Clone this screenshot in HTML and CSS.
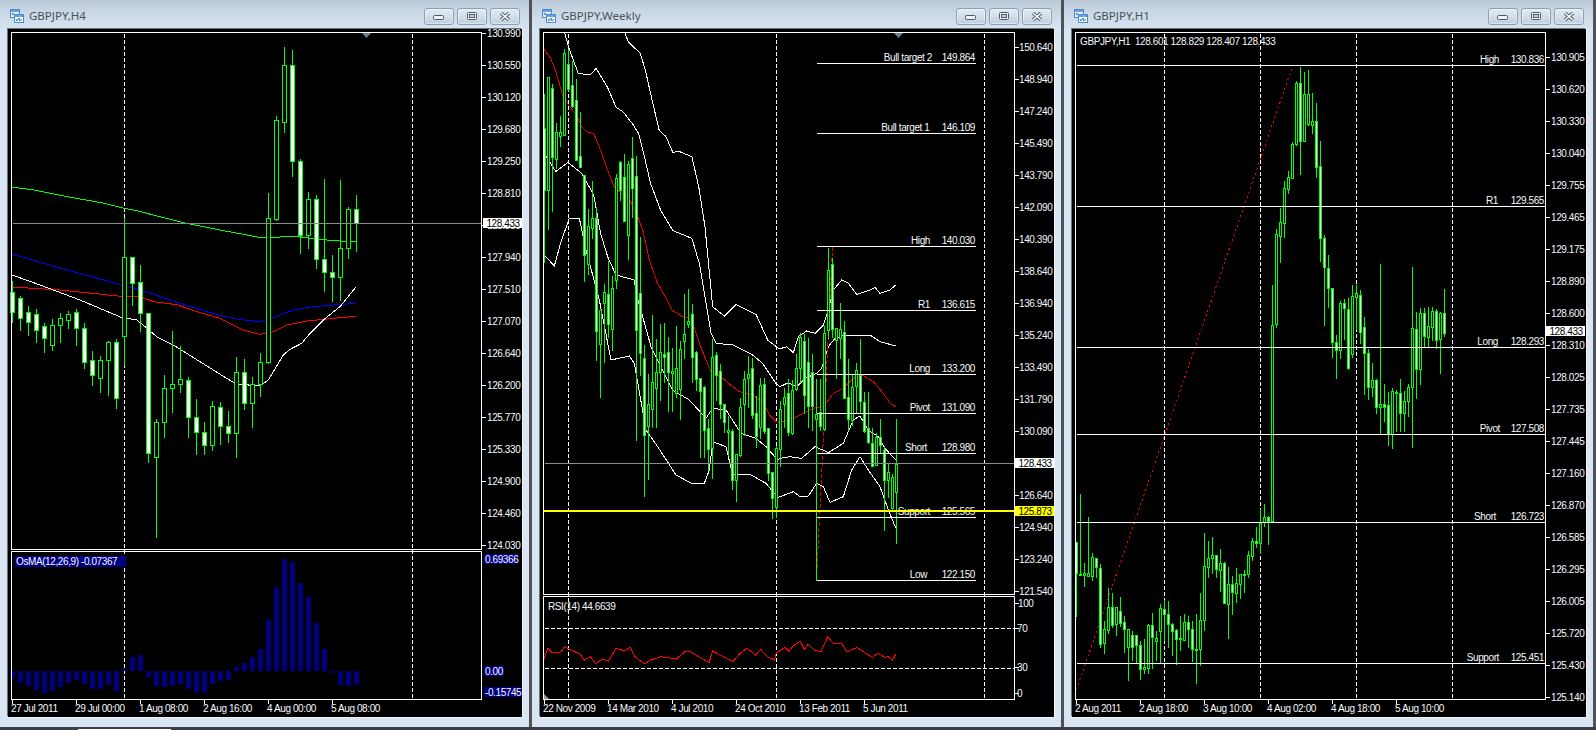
FILE: index.html

```html
<!DOCTYPE html>
<html lang="en">
<head>
    <meta charset="UTF-8">
    <title>GBPJPY charts</title>
    <link rel="stylesheet" href="styles.css">
</head>
<body>

    <svg class="sprite" width="0" height="0">
        <symbol id="chart-icon" viewBox="0 0 14 14">
            <rect x="0.5" y="0.5" width="9" height="8" fill="#e4f0fc" stroke="#4d8acb"/>
            <rect x="1" y="1" width="8" height="2" fill="#6ba3dc"/>
            <polyline points="2,6 3,4 5,7 7,5" fill="none" stroke="#3b78bb"/>
            <rect x="4.5" y="5.5" width="9" height="8" fill="#f2f8fe" stroke="#4d8acb"/>
            <rect x="5" y="6" width="8" height="2" fill="#6ba3dc"/>
            <polyline points="6,10 7,12 9,9 10,12 12,10" fill="none" stroke="#3b78bb"/>
        </symbol>
        <symbol id="btn-min" viewBox="0 0 12 9">
            <rect x="0.5" y="3.5" width="10" height="4" rx="1" fill="#eef3f8" stroke="#4c5a69"/>
        </symbol>
        <symbol id="btn-max" viewBox="0 0 12 9">
            <rect x="1.5" y="0.5" width="9" height="7" rx="1" fill="#eef3f8" stroke="#4c5a69"/>
            <rect x="3.5" y="2.5" width="5" height="3" fill="#c5d2e0" stroke="#4c5a69"/>
        </symbol>
        <symbol id="btn-close" viewBox="0 0 12 9">
            <path d="M2 1 L10 8 M10 1 L2 8" stroke="#4c5a69" stroke-width="3.4" fill="none"/>
            <path d="M2 1 L10 8 M10 1 L2 8" stroke="#fff" stroke-width="1.6" fill="none"/>
        </symbol>
    </svg>

    <main class="desk">

        <section class="window">
            <header class="titlebar">
                <svg class="win-icon"><use href="#chart-icon"/></svg>
                <span class="title">GBPJPY,H4</span>
                <div class="buttons">
                    <button class="btn"><svg><use href="#btn-min"/></svg></button>
                    <button class="btn"><svg><use href="#btn-max"/></svg></button>
                    <button class="btn"><svg><use href="#btn-close"/></svg></button>
                </div>
            </header>
            <div class="client">
                <svg class="chart" id="chart-h4" viewBox="8 29 514 688"></svg>
            </div>
        </section>

        <section class="window">
            <header class="titlebar">
                <svg class="win-icon"><use href="#chart-icon"/></svg>
                <span class="title">GBPJPY,Weekly</span>
                <div class="buttons">
                    <button class="btn"><svg><use href="#btn-min"/></svg></button>
                    <button class="btn"><svg><use href="#btn-max"/></svg></button>
                    <button class="btn"><svg><use href="#btn-close"/></svg></button>
                </div>
            </header>
            <div class="client">
                <svg class="chart" id="chart-weekly" viewBox="540 29 514 688"></svg>
            </div>
        </section>

        <section class="window">
            <header class="titlebar">
                <svg class="win-icon"><use href="#chart-icon"/></svg>
                <span class="title">GBPJPY,H1</span>
                <div class="buttons">
                    <button class="btn"><svg><use href="#btn-min"/></svg></button>
                    <button class="btn"><svg><use href="#btn-max"/></svg></button>
                    <button class="btn"><svg><use href="#btn-close"/></svg></button>
                </div>
            </header>
            <div class="client">
                <svg class="chart" id="chart-h1" viewBox="1072 29 514 688"></svg>
            </div>
        </section>

    </main>

    <footer class="taskbar">
        <div class="tab"></div>
    </footer>

    <script src="chart.js"></script>

</body>
</html>
```

FILE: styles.css

```css
body {
    margin: 0;
    height: 730px;
    overflow: hidden;
    display: flex;
    flex-direction: column;
    background: #4f5358;
}

.sprite {
    position: absolute;
}

.desk {
    display: flex;
    gap: 3px;
    height: 727px;
}

.window {
    width: 529px;
    flex: none;
    display: flex;
    flex-direction: column;
    background: #d9e5f2;
}

.titlebar {
    height: 28px;
    flex: none;
    display: flex;
    align-items: flex-start;
    padding: 8px 9px 0 10px;
    box-sizing: border-box;
    background: linear-gradient(#b9c8d7, #c9d7e5 40%, #d6e3f0);
}

.win-icon {
    width: 14px;
    height: 14px;
    margin-top: 1px;
    flex: none;
}

.title {
    margin-left: 5px;
    font: 11.5px/16px "Noto Sans", sans-serif;
    color: #47525e;
}

.buttons {
    margin-left: auto;
    display: flex;
    gap: 3px;
}

.btn {
    width: 30px;
    height: 17px;
    padding: 0;
    display: flex;
    align-items: center;
    justify-content: center;
    border: 1px solid #8a9fb8;
    border-radius: 3px;
    background: linear-gradient(#e3ebf4, #d2deea 50%, #bfcedd);
    box-shadow: inset 0 0 0 1px rgba(255, 255, 255, 0.45);
}

.btn svg {
    width: 12px;
    height: 9px;
}

.client {
    margin: 1px 7px 10px 8px;
    height: 688px;
    background: #000;
    box-shadow: -1px -1px 0 #6d7277, 1px 1px 0 #eef3f8;
}

.chart {
    display: block;
    width: 514px;
    height: 688px;
}

.chart text {
    font: 10px "Liberation Sans", sans-serif;
    letter-spacing: -0.4px;
    white-space: pre;
    fill: #f6f9fd;
}

.chart text.on-white {
    fill: #000;
}

.chart line,
.chart rect,
.chart polyline {
    shape-rendering: crispEdges;
}

.taskbar {
    height: 3px;
    background: #3c3f43;
    padding-left: 78px;
}

.tab {
    width: 93px;
    height: 1px;
    margin-top: 2px;
    background: #fff;
}
```

FILE: chart.js

```js
const NS = 'http://www.w3.org/2000/svg';
const LIME = '#00ff00';
const NAVY = '#000080';
const GREY = '#8c8c8c';

function add(svg, tag, attrs, text) {
    const node = document.createElementNS(NS, tag);
    for (const key in attrs) node.setAttribute(key, attrs[key]);
    if (text !== undefined) node.textContent = text;
    svg.appendChild(node);
    return node;
}

const px = v => Math.round(v) + 0.5;

function line(svg, x1, y1, x2, y2, stroke, extra) {
    add(svg, 'line', Object.assign({ x1: px(x1), y1: px(y1), x2: px(x2), y2: px(y2), stroke }, extra));
}

function dashed(svg, x1, y1, x2, y2, stroke) {
    line(svg, x1, y1, x2, y2, stroke || '#fff', { 'stroke-dasharray': '4 2' });
}

function path(svg, points, stroke) {
    add(svg, 'polyline', { points: points.map(p => p.join(',')).join(' '), fill: 'none', stroke });
}

function label(svg, x, y, str, anchor, cls) {
    const attrs = { x, y: y + 3.5, 'text-anchor': anchor || 'start' };
    if (cls) attrs.class = cls;
    add(svg, 'text', attrs, str);
}

function box(svg, x1, y1, x2, y2) {
    add(svg, 'rect', { x: x1 + 0.5, y: y1 + 0.5, width: x2 - x1, height: y2 - y1, fill: 'none', stroke: '#fff' });
}

function tag(svg, x, y, w, h, fill, str, cls) {
    add(svg, 'rect', { x, y, width: w, height: h, fill });
    label(svg, x + 1, y + h / 2, str, 'start', cls);
}

// rows are [wickTop, bodyTop, bodyBottom, wickBottom, filled], y = oy + value / k
function series(x0, step, oy, k, rows) {
    return rows.map((r, i) => ({
        x: x0 + step * i,
        wt: oy + r[0] / k,
        bt: oy + r[1] / k,
        bb: oy + r[2] / k,
        wb: oy + r[3] / k,
        filled: r[4]
    }));
}

function candles(svg, list, half) {
    for (const c of list) {
        line(svg, c.x, c.wt, c.x, c.wb, LIME);
        add(svg, 'rect', {
            x: c.x - half + 0.5,
            y: px(c.bt),
            width: half * 2,
            height: Math.max(Math.round(c.bb) - Math.round(c.bt), 1),
            fill: c.filled ? '#fff' : '#000',
            stroke: LIME
        });
    }
}

// points given in crop pixels, turned into page pixels
const crop = (pts, ox, oy, kx, ky) => pts.map(p => [ox + p[0] / kx, oy + p[1] / (ky || kx)]);

function priceAxis(svg, plotRight, textX, top, step, values) {
    values.forEach((v, i) => {
        const y = top + step * i;
        line(svg, plotRight, y, plotRight + 4, y, '#fff');
        label(svg, textX, y, v);
    });
}

function timeAxis(svg, y, labels) {
    for (const l of labels) {
        line(svg, l[0] + 1, 699, l[0] + 1, 703, '#fff');
        label(svg, l[0], y, l[1]);
    }
}

/* ---------- H4 ---------- */

function drawH4() {
    const svg = document.getElementById('chart-h4');
    dashed(svg, 124, 33, 124, 699);
    dashed(svg, 412, 33, 412, 699);

    path(svg, [[12, 187], [34, 190], [69, 197], [103, 203]].concat(crop([[13, 115], [50, 122], [100, 135], [150, 148], [200, 160], [300, 180], [370, 193], [420, 203], [480, 201], [530, 199], [580, 206], [630, 211], [680, 214], [707, 214]], 120, 170, 3)), LIME);
    path(svg, [[12, 254], [60, 268], [118, 284]].concat(crop([[0, 345], [70, 362], [150, 390], [230, 415], [300, 437], [350, 447], [420, 455], [460, 442], [520, 420], [580, 410], [630, 406], [707, 400]], 120, 170, 3)), '#0000ff');
    path(svg, [[12, 287], [60, 290], [118, 296]].concat(crop([[0, 380], [60, 380], [100, 395], [170, 404], [240, 428], [300, 445], [370, 480], [420, 493], [460, 485], [500, 465], [560, 453], [620, 447], [707, 439]], 120, 170, 3)), '#ff0000');
    path(svg, [[12, 275], [40, 285], [80, 300], [118, 316]].concat(crop([[0, 441], [50, 450], [75, 470], [110, 500], [160, 525], [240, 575], [320, 625], [350, 643], [420, 647], [445, 630], [490, 555], [510, 538], [545, 520], [570, 490], [610, 450], [660, 410], [707, 352]], 120, 170, 3)), '#fff');

    candles(svg, series(12, 8, 0, 1, [
        [280, 292, 312, 322, 1], [295, 298, 318, 330, 1], [305, 312, 322, 335, 1], [308, 314, 330, 342, 1],
        [322, 326, 338, 352, 1], [318, 325, 345, 350, 0], [312, 318, 325, 342, 0], [310, 314, 320, 328, 0],
        [308, 312, 328, 345, 1], [322, 328, 362, 368, 1], [350, 360, 375, 385, 1], [355, 360, 378, 392, 0],
        [340, 342, 360, 395, 0], [338, 342, 398, 408, 1]
    ]), 2);
    candles(svg, series(124, 8, 170, 3, [
        [140, 262, 497, 585, 0], [262, 262, 338, 405, 1], [282, 337, 430, 483, 1], [430, 430, 848, 876, 1],
        [745, 757, 860, 1100, 0], [612, 655, 757, 800, 0], [480, 643, 655, 726, 0], [525, 628, 643, 666, 0],
        [618, 631, 742, 800, 1], [685, 742, 787, 852, 1], [753, 787, 826, 852, 1], [690, 709, 826, 840, 0],
        [693, 712, 769, 822, 1], [720, 769, 790, 816, 1], [558, 607, 790, 860, 0], [564, 607, 700, 717, 1],
        [618, 643, 700, 770, 0], [546, 577, 643, 678, 0], [66, 145, 577, 580, 0]
    ]), 2);
    candles(svg, series(276, 8, 0, 1, [
        [115, 120, 219, 220, 0], [46, 65, 122, 132, 0], [49, 65, 161, 176, 1], [158, 161, 235, 253, 1],
        [191, 199, 235, 248, 0], [194, 199, 259, 268, 1], [178, 259, 272, 291, 1], [254, 272, 277, 301, 1],
        [179, 248, 277, 300, 0], [206, 209, 248, 258, 0], [194, 209, 223, 251, 1]
    ]), 2);

    line(svg, 12, 223, 481, 223, GREY);

    // OsMA histogram, tops in crop pixels against a zero line at 423
    const bars = [443, 460, 468, 480, 490, 484, 472, 460, 450, 462, 478, 478, 466, 484, 417, 381, 375, 442, 468, 472,
        468, 462, 478, 486, 490, 462, 454, 450, 411, 399, 381, 357, 269, 171, 87, 96, 159, 201, 279, 357, 430, 466, 468, 466];
    bars.forEach((v, i) => {
        const a = 530 + Math.min(v, 423) / 3;
        const b = 530 + Math.max(v, 423) / 3;
        add(svg, 'rect', { x: 12 + 8 * i - 2, y: a, width: 5, height: b - a, fill: NAVY });
    });

    box(svg, 11, 32, 481, 549);
    box(svg, 11, 551, 481, 699);
    add(svg, 'polygon', { points: '362,33 371,33 366.5,38', fill: '#6e7e8e' });

    priceAxis(svg, 481, 487, 33, 32, ['130.990', '130.550', '130.120', '129.680', '129.250', '128.810', '128.380', '127.940',
        '127.510', '127.070', '126.640', '126.200', '125.770', '125.330', '124.900', '124.460', '124.030']);
    tag(svg, 483, 218, 39, 10, '#fff', ' 128.433', 'on-white');
    tag(svg, 15, 556, 111, 11, NAVY, 'OsMA(12,26,9) -0.07367');
    tag(svg, 484, 554, 34, 10, NAVY, '0.69366');
    tag(svg, 484, 666, 20, 10, NAVY, '0.00');
    tag(svg, 484, 687, 38, 10, NAVY, '-0.15745');

    timeAxis(svg, 708, [[11, '27 Jul 2011'], [75, '29 Jul 00:00'], [139, '1 Aug 08:00'], [203, '2 Aug 16:00'], [267, '4 Aug 00:00'], [331, '5 Aug 08:00']]);
}

/* ---------- Weekly ---------- */

function drawWeekly() {
    const svg = document.getElementById('chart-weekly');
    dashed(svg, 568, 33, 568, 699);
    dashed(svg, 776, 33, 776, 699);
    dashed(svg, 984, 33, 984, 699);

    const upper = crop([[275, 97], [285, 125], [320, 160], [335, 210], [350, 280], [375, 390], [395, 410], [415, 458], [430, 453], [470, 470], [490, 560], [505, 660]], 530, 0, 2.904, 3)
        .concat(crop([[505, 60], [530, 320], [565, 348], [600, 313], [660, 343], [695, 420], [730, 447]], 536, 200, 3))
        .concat(crop([[20, 350], [40, 368], [55, 320], [80, 303], [105, 310], [130, 285], [140, 255], [160, 180], [185, 150], [205, 160], [230, 193], [270, 180], [285, 172], [300, 190], [330, 180], [347, 165]], 780, 230, 3));
    const second = crop([[100, 97], [115, 150], [140, 220], [175, 225], [192, 205], [225, 262], [250, 322], [270, 335], [300, 375], [315, 400], [330, 460], [350, 550], [380, 632], [415, 692], [470, 715]], 530, 0, 2.904, 3)
        .concat(crop([[490, 190], [525, 400], [540, 430], [590, 435], [650, 465], [680, 490], [720, 550]], 536, 200, 3))
        .concat(crop([[0, 470], [25, 458], [50, 470], [75, 445], [110, 430], [125, 415], [145, 350], [165, 325], [195, 315], [270, 315], [300, 335], [347, 348]], 780, 230, 3));
    const third = crop([[45, 465], [75, 515], [110, 487], [150, 520], [185, 585], [205, 700]], 530, 0, 2.904, 3)
        .concat(crop([[215, 170], [240, 225], [295, 240], [300, 280], [320, 350], [345, 440], [410, 570], [460, 600], [510, 655], [530, 625], [570, 630], [615, 700], [660, 715], [690, 740], [725, 780]], 536, 200, 3))
        .concat(crop([[0, 685], [30, 680], [65, 685], [105, 650], [145, 668], [190, 640], [220, 570], [240, 558], [265, 600], [295, 620], [315, 655], [347, 690]], 780, 230, 3));
    const lower = crop([[25, 165], [55, 198], [75, 125], [100, 55], [130, 55], [150, 150], [190, 300], [225, 480], [280, 468], [295, 490], [330, 690], [365, 740], [420, 825], [470, 852], [505, 850], [520, 810], [530, 725], [570, 740], [590, 825], [640, 822], [690, 850], [725, 892]], 536, 200, 3)
        .concat(crop([[0, 800], [40, 785], [60, 800], [85, 798], [110, 760], [130, 770], [150, 817], [190, 800], [215, 720], [240, 680], [265, 720], [300, 770], [325, 840], [347, 893]], 780, 230, 3));
    path(svg, upper, '#fff');
    path(svg, second, '#fff');
    path(svg, third, '#fff');
    path(svg, lower, '#fff');

    const ma = crop([[40, 148], [60, 175], [75, 215], [95, 285], [115, 320], [135, 345], [150, 380], [165, 395], [185, 400], [205, 450], [225, 510], [245, 562], [265, 580], [290, 600]], 530, 0, 2.904, 3)
        .concat(crop([[305, 50], [320, 90], [340, 180], [365, 250], [385, 285], [408, 330], [440, 350], [465, 355], [490, 430], [510, 480], [525, 515], [560, 535], [590, 560], [610, 575], [650, 585], [680, 605], [700, 645], [720, 665]], 536, 200, 3))
        .concat(crop([[0, 578], [50, 560], [100, 535], [130, 530], [160, 490], [190, 475], [220, 445], [250, 437], [280, 455], [310, 490], [330, 520], [347, 530]], 780, 230, 3));
    path(svg, ma, '#e00000');

    line(svg, 832, 246, 816, 580, '#e00000', { 'stroke-dasharray': '4 2' });

    candles(svg, series(544, 4, 0, 1, [
        [93, 128, 190, 262, 1], [76, 77, 190, 229, 0], [83, 88, 157, 211, 1], [122, 132, 159, 168, 0],
        [115, 132, 136, 146, 0], [48, 53, 135, 135, 0], [48, 64, 89, 90, 1], [60, 85, 106, 107, 1],
        [78, 100, 160, 160, 1], [111, 156, 167, 167, 1], [174, 175, 255, 281, 1], [208, 226, 264, 274, 0],
        [180, 218, 228, 238, 0], [206, 218, 331, 360, 1], [310, 310, 344, 397, 0], [283, 292, 303, 362, 0],
        [260, 294, 324, 337, 1], [275, 288, 329, 350, 0], [173, 178, 280, 288, 0], [160, 162, 190, 200, 1],
        [153, 177, 221, 210, 1], [160, 164, 235, 259, 0], [136, 158, 188, 217, 1], [155, 176, 330, 440, 1]
    ]), 1);
    candles(svg, series(640, 4, 200, 3, [
        [108, 280, 460, 525, 1], [432, 475, 706, 887, 1], [520, 613, 677, 836, 0], [343, 547, 628, 680, 0],
        [415, 517, 565, 680, 0], [368, 455, 515, 600, 0], [366, 461, 470, 545, 1], [408, 455, 517, 632, 1],
        [440, 514, 520, 632, 0], [376, 503, 580, 590, 0], [420, 448, 568, 656, 0], [280, 403, 424, 475, 0],
        [265, 364, 373, 380, 0], [310, 341, 472, 545, 1], [450, 457, 538, 570, 1], [530, 533, 574, 770, 1],
        [555, 560, 690, 770, 1], [655, 685, 748, 810, 1], [415, 470, 743, 835, 0], [453, 466, 525, 600, 1],
        [490, 512, 613, 655, 1], [610, 613, 667, 695, 1], [645, 691, 695, 765, 0], [685, 694, 840, 868, 1],
        [760, 763, 840, 902, 0], [590, 622, 765, 768, 0], [510, 538, 613, 705, 0], [465, 523, 533, 620, 0],
        [470, 505, 646, 655, 1], [585, 640, 707, 740, 1], [530, 555, 682, 715, 0], [530, 553, 693, 700, 1],
        [680, 685, 820, 840, 1], [815, 815, 893, 955, 1], [735, 745, 922, 950, 0], [600, 628, 748, 797, 0],
        [560, 590, 612, 680, 0], [535, 578, 695, 705, 1], [538, 570, 700, 703, 0], [460, 505, 568, 570, 0],
        [395, 412, 505, 545, 0], [398, 422, 585, 640, 1]
    ]), 1);
    candles(svg, series(808, 4, 230, 3, [
        [320, 395, 527, 590, 1], [370, 425, 527, 600, 1], [445, 553, 568, 1050, 0], [445, 545, 587, 600, 1],
        [285, 310, 597, 600, 0], [50, 120, 300, 325, 0], [80, 102, 298, 320, 1], [290, 293, 330, 445, 0],
        [215, 297, 325, 385, 0], [270, 305, 505, 505, 1], [385, 500, 568, 600, 1], [430, 472, 570, 585, 0],
        [395, 420, 467, 545, 0], [325, 435, 512, 550, 1], [482, 517, 602, 605, 1], [482, 595, 637, 640, 1],
        [590, 640, 707, 707, 1], [605, 622, 705, 705, 0], [565, 620, 645, 670, 1], [645, 660, 750, 900, 1],
        [700, 727, 750, 800, 0], [730, 740, 835, 840, 0], [565, 703, 785, 938, 0]
    ]), 1);

    const levels = [
        ['Bull target 2', '149.864', 63, 932], ['Bull target 1', '146.109', 133, 929.5], ['High', '140.030', 246, 930],
        ['R1', '136.615', 310, 930], ['Long', '133.200', 374, 930], ['Pivot', '131.090', 413, 930],
        ['Short', '128.980', 453, 927], ['Support', '125.565', 517, 930], ['Low', '122.150', 580, 927]
    ];
    for (const l of levels) {
        line(svg, 816, l[2], 975, l[2], '#fff');
        label(svg, l[3], l[2] - 6, l[0], 'end');
        label(svg, 975, l[2] - 6, l[1], 'end');
    }

    line(svg, 544, 463, 1014, 463, GREY);
    add(svg, 'rect', { x: 544, y: 510, width: 471, height: 2, fill: '#ffff00' });

    box(svg, 543, 32, 1014, 594);
    box(svg, 543, 596, 1014, 699);
    add(svg, 'polygon', { points: '894,33 903,33 898.5,38', fill: '#6e7e8e' });
    add(svg, 'polygon', { points: '544,694 544,699 549,699', fill: '#8c99a6' });

    dashed(svg, 544, 628, 1013, 628);
    dashed(svg, 544, 668, 1013, 668);
    path(svg, crop([[40, 658], [52, 625], [65, 638], [90, 636], [100, 620], [115, 628], [145, 642], [158, 660], [175, 650], [190, 670], [210, 658], [228, 663], [250, 625], [275, 633], [290, 622], [305, 650], [332, 672], [350, 660], [380, 650], [425, 657], [450, 635], [465, 635], [520, 668], [530, 633], [590, 665], [610, 640], [630, 625], [655, 645], [670, 628], [690, 650], [710, 660], [715, 640], [740, 622], [752, 635], [765, 617], [785, 604], [797, 628], [808, 613], [825, 630], [845, 635], [865, 590], [880, 610], [905, 610], [920, 636], [950, 622], [975, 640], [995, 652], [1010, 640], [1030, 652], [1040, 650], [1053, 660], [1062, 643]], 530, 440, 2.904, 3), '#ff0000');
    label(svg, 548, 606, 'RSI(14) 44.6639');

    priceAxis(svg, 1014, 1019, 47, 32, ['150.640', '148.940', '147.240', '145.490', '143.790', '142.090', '140.390', '138.640', '136.940',
        '135.240', '133.490', '131.790', '130.090', '128.390', '126.640', '124.940', '123.240', '121.540']);
    tag(svg, 1015, 458, 39, 10, '#fff', ' 128.433', 'on-white');
    tag(svg, 1015, 506, 39, 10, '#ffff00', ' 125.873', 'on-white');

    for (const r of [['100', 603], ['70', 628], ['30', 667], ['0', 693]]) {
        line(svg, 1014, r[1], 1018, r[1], '#fff');
        label(svg, 1017 + (r[0] === '100' ? 1 : 0), r[1], r[0]);
    }

    timeAxis(svg, 708, [[543, '22 Nov 2009'], [607, '14 Mar 2010'], [671, '4 Jul 2010'], [735, '24 Oct 2010'], [799, '13 Feb 2011'], [863, '5 Jun 2011']]);
}

/* ---------- H1 ---------- */

function drawH1() {
    const svg = document.getElementById('chart-h1');
    dashed(svg, 1164, 33, 1164, 699);
    dashed(svg, 1260, 33, 1260, 699);
    dashed(svg, 1356, 33, 1356, 699);
    dashed(svg, 1452, 33, 1452, 699);

    line(svg, 1076, 689, 1292, 66, '#ff0000', { 'stroke-dasharray': '2 3' });

    candles(svg, series(1076, 4, 490, 3, [
        [155, 157, 250, 378, 1], [8, 252, 254, 255, 0], [215, 248, 254, 288, 0], [77, 250, 257, 258, 0],
        [186, 202, 257, 270, 0], [200, 205, 232, 262, 1], [218, 235, 463, 470, 1], [390, 418, 460, 490, 0],
        [290, 352, 420, 430, 0], [305, 352, 406, 410, 1], [350, 352, 402, 435, 0], [318, 362, 398, 407, 1],
        [375, 397, 418, 487, 1], [418, 418, 472, 570, 0], [420, 434, 472, 510, 1], [435, 436, 466, 520, 1],
        [450, 466, 538, 567, 1], [445, 532, 538, 548, 0], [400, 406, 533, 550, 0], [366, 406, 440, 535, 1],
        [420, 443, 452, 510, 0], [340, 354, 423, 515, 0], [328, 358, 373, 450, 1], [330, 373, 403, 470, 1],
        [395, 403, 422, 495, 1], [414, 420, 446, 523, 1], [375, 444, 447, 480, 0], [368, 397, 450, 450, 0],
        [375, 397, 417, 470, 1], [390, 418, 478, 512, 1], [370, 476, 479, 580, 0], [305, 391, 476, 525, 0],
        [126, 229, 391, 420, 0], [150, 203, 230, 260, 0], [137, 195, 203, 250, 0], [195, 196, 238, 260, 1],
        [175, 220, 240, 302, 0], [213, 220, 340, 340, 1], [228, 283, 342, 445, 0], [255, 283, 305, 372, 1],
        [230, 280, 308, 335, 0], [252, 252, 283, 325, 0], [237, 252, 255, 305, 0], [180, 195, 252, 262, 0],
        [140, 153, 198, 210, 0], [108, 153, 160, 172, 1], [55, 98, 158, 190, 0], [40, 82, 97, 108, 0],
        [75, 82, 92, 162, 1]
    ]), 1);
    candles(svg, series(1272, 4, 0, 1, [
        [284, 325, 521, 521, 0], [228, 234, 324, 327, 0], [207, 222, 236, 262, 0], [180, 188, 223, 237, 0],
        [170, 177, 189, 193, 0], [141, 144, 178, 178, 0], [80, 83, 144, 145, 0], [66, 83, 141, 174, 1],
        [71, 94, 141, 140, 0], [69, 94, 124, 125, 0], [92, 121, 125, 133, 0], [102, 121, 167, 177, 1],
        [140, 166, 238, 261, 1]
    ]), 1);
    candles(svg, series(1324, 4, 210, 3, [
        [72, 85, 172, 345, 1], [132, 175, 235, 290, 1], [232, 235, 395, 440, 1], [372, 395, 420, 503, 1],
        [270, 280, 420, 443, 0], [265, 280, 295, 387, 1], [262, 296, 475, 476, 1], [222, 258, 433, 440, 0],
        [222, 250, 260, 358, 0], [238, 254, 365, 398, 1], [318, 350, 428, 552, 1], [415, 428, 530, 566, 1],
        [457, 511, 530, 558, 0], [505, 511, 590, 608, 1], [160, 583, 590, 672, 0], [518, 581, 590, 632, 1],
        [543, 586, 672, 705, 1], [532, 544, 672, 713, 0], [538, 546, 549, 662, 0], [505, 548, 610, 662, 1],
        [540, 572, 610, 662, 0], [520, 530, 572, 618, 0], [168, 355, 530, 710, 0], [303, 358, 478, 563, 1],
        [291, 310, 478, 521, 0], [291, 310, 379, 407, 1], [288, 347, 380, 407, 0], [289, 302, 350, 390, 0],
        [295, 302, 390, 415, 1], [303, 310, 387, 490, 0], [234, 310, 368, 378, 1]
    ]), 1);

    const levels = [
        ['High', '130.836', 65, 1499], ['R1', '129.565', 206, 1498], ['Long', '128.293', 347, 1498],
        ['Pivot', '127.508', 434, 1500], ['Short', '126.723', 522, 1496], ['Support', '125.451', 663, 1499]
    ];
    for (const l of levels) {
        line(svg, 1076, l[2], 1545, l[2], '#fff');
        label(svg, l[3], l[2] - 6, l[0], 'end');
        label(svg, 1544, l[2] - 6, l[1], 'end');
    }

    box(svg, 1075, 32, 1545, 699);
    label(svg, 1080, 41, 'GBPJPY,H1  128.601 128.829 128.407 128.433');

    priceAxis(svg, 1545, 1551, 57, 32, ['130.905', '130.620', '130.330', '130.040', '129.755', '129.465', '129.175', '128.890', '128.600', '128.310', '128.025',
        '127.735', '127.445', '127.160', '126.870', '126.585', '126.295', '126.005', '125.720', '125.430', '125.140']);
    tag(svg, 1546, 326, 39, 10, '#fff', ' 128.433', 'on-white');

    timeAxis(svg, 708, [[1075, '2 Aug 2011'], [1139, '2 Aug 18:00'], [1203, '3 Aug 10:00'], [1267, '4 Aug 02:00'], [1331, '4 Aug 18:00'], [1395, '5 Aug 10:00']]);
}

drawH4();
drawWeekly();
drawH1();
```
